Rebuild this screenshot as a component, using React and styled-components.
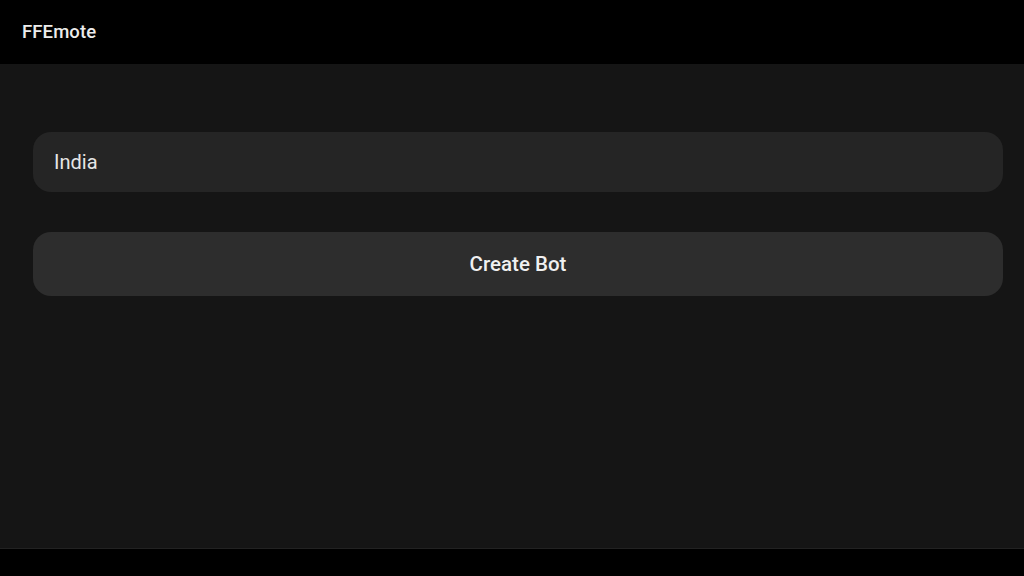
import React, { useState } from 'react';
import styled, { createGlobalStyle } from 'styled-components';

const GlobalStyle = createGlobalStyle`
  html, body {
    margin: 0;
    padding: 0;
    background: #000;
    font-family: Roboto, "Noto Sans", sans-serif;
  }
  * {
    box-sizing: border-box;
  }
`;

const Screen = styled.div`
  display: flex;
  flex-direction: column;
  width: 1024px;
  height: 576px;
  background: #000;
  overflow: hidden;
`;

const TopBar = styled.header`
  display: flex;
  align-items: center;
  height: 64px;
  padding: 0 22px;
  background: #000;
`;

const Title = styled.h1`
  margin: 0;
  color: #ececec;
  font-size: 18.5px;
  font-weight: 500;
  letter-spacing: 0.1px;
`;

const Content = styled.main`
  flex: 1;
  display: flex;
  flex-direction: column;
  gap: 40px;
  padding: 68px 21px 0 33px;
  background: #151515;
`;

const Field = styled.input`
  height: 60px;
  padding: 0 21px;
  border: none;
  border-radius: 18px;
  background: #252525;
  color: #e6e6e6;
  font-family: inherit;
  font-size: 20px;
  outline: none;
`;

const Button = styled.button`
  height: 64px;
  border: none;
  border-radius: 18px;
  background: #2d2d2d;
  color: #f0f0f0;
  font-family: inherit;
  font-size: 20.5px;
  font-weight: 500;
  cursor: pointer;
  &:hover {
    background: #333;
  }
`;

const BottomBar = styled.footer`
  height: 28px;
  border-top: 1px solid #222;
  background: #000;
`;

const App = () => {
    const [region, setRegion] = useState('India');

    return (
        <Screen>
            <GlobalStyle />
            <TopBar>
                <Title>FFEmote</Title>
            </TopBar>
            <Content>
                <Field value={region} onChange={(e) => setRegion(e.target.value)} />
                <Button>Create Bot</Button>
            </Content>
            <BottomBar />
        </Screen>
    );
};

export default App;
